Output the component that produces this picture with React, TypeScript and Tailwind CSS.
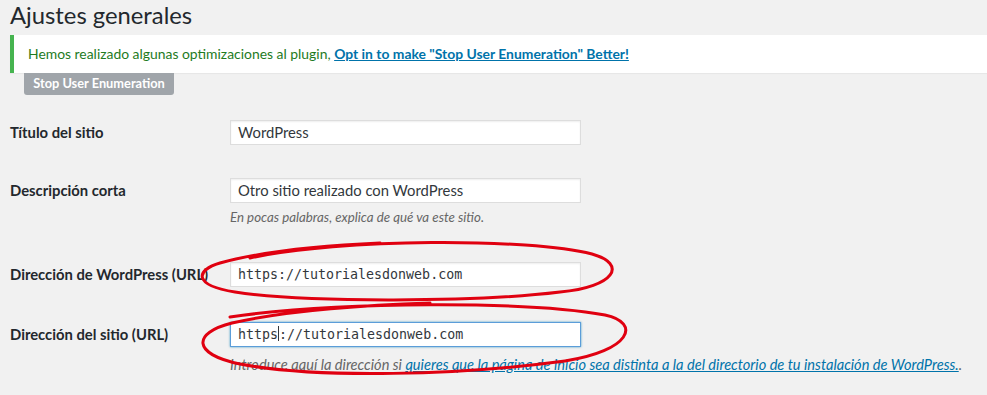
import React from 'react';

const sans = "font-['Lato','Noto_Sans',sans-serif]";

const Field: React.FC<{ label: string; value: string; mono?: boolean; focused?: boolean; caret?: number; children?: React.ReactNode; top: string }> = ({ label, value, mono, focused, caret, children, top }) => (
    <div className={`flex ${top}`}>
        <div className="w-[230px] pl-[10px] pt-[3px] text-[14.8px] font-bold text-[#23282d] leading-[18px] shrink-0">{label}</div>
        <div className="flex flex-col">
            <div className={`w-[351px] h-[25px] bg-white border ${focused ? 'border-[#5b9dd9] shadow-[0_0_2px_rgba(30,140,190,0.8)]' : 'border-[#dddddd] shadow-[inset_0_1px_2px_rgba(0,0,0,0.07)]'} flex items-center px-[7px] text-[#32373c] ${mono ? "font-['DejaVu_Sans_Mono',monospace] text-[13.3px]" : 'text-[14.8px]'}`}>
                {caret !== undefined ? (
                    <span>
                        {value.slice(0, caret)}
                        <span className="inline-block w-px h-[15px] bg-[#32373c] align-middle -mt-[2px]"></span>
                        {value.slice(caret)}
                    </span>
                ) : (
                    value
                )}
            </div>
            {children}
        </div>
    </div>
);

export default function App() {
    return (
        <div className={`relative w-[987px] h-[395px] bg-[#f1f1f1] overflow-hidden ${sans}`}>
            <h1 className="pl-[10px] pt-[1px] text-[23.8px] leading-[29px] text-[#23282d] font-normal">Ajustes generales</h1>

            {/* Notice */}
            <div className="ml-[10px] mt-[5px] h-[38px] bg-white border-l-4 border-[#46b450] shadow-[0_1px_1px_rgba(0,0,0,0.04)] flex items-center pl-[14px] text-[13.9px] text-[#1e7b1e]">
                <span>
                    Hemos realizado algunas optimizaciones al plugin,{' '}
                    <a className="font-bold text-[#0073aa] underline">Opt in to make "Stop User Enumeration" Better!</a>
                </span>
            </div>
            <div className="ml-[24px] w-[150px] h-[22px] bg-[#a0a5aa] rounded-b-[3px] flex items-center justify-center text-white text-[12.8px] font-bold">
                Stop User Enumeration
            </div>

            <Field top="mt-[25px]" label="Título del sitio" value="WordPress" />
            <Field top="mt-[33px]" label="Descripción corta" value="Otro sitio realizado con WordPress">
                <p className="mt-[6px] text-[13.3px] italic text-[#666666] leading-[16px]">En pocas palabras, explica de qué va este sitio.</p>
            </Field>
            <Field top="mt-[37px]" label="Dirección de WordPress (URL)" value="https://tutorialesdonweb.com" mono />
            <Field top="mt-[35px]" label="Dirección del sitio (URL)" value="https://tutorialesdonweb.com" mono focused caret={5}>
                <p className="mt-[10px] text-[14.6px] italic text-[#666666] leading-[16px] whitespace-nowrap">
                    Introduce aquí la dirección si <a className="text-[#0073aa] underline">quieres que la página de inicio sea distinta a la del directorio de tu instalación de WordPress.</a>.
                </p>
            </Field>

            {/* Hand-drawn red marks */}
            <svg className="absolute inset-0 pointer-events-none" width="987" height="395" viewBox="0 0 987 395">
                <path
                    d="M 250 258 C 340 238, 530 238, 592 254 C 628 264, 615 287, 560 292 C 470 303, 300 302, 235 292 C 192 285, 196 270, 220 263 C 260 252, 310 246, 380 243"
                    fill="none"
                    stroke="#e00010"
                    strokeWidth="3"
                    strokeLinecap="round"
                />
                <path
                    d="M 230 317 C 340 301, 530 301, 605 315 C 642 323, 630 351, 565 361 C 460 375, 320 379, 240 364 C 192 354, 192 333, 232 323 C 280 312, 340 306, 430 303"
                    fill="none"
                    stroke="#e00010"
                    strokeWidth="3"
                    strokeLinecap="round"
                />
            </svg>
        </div>
    );
}
